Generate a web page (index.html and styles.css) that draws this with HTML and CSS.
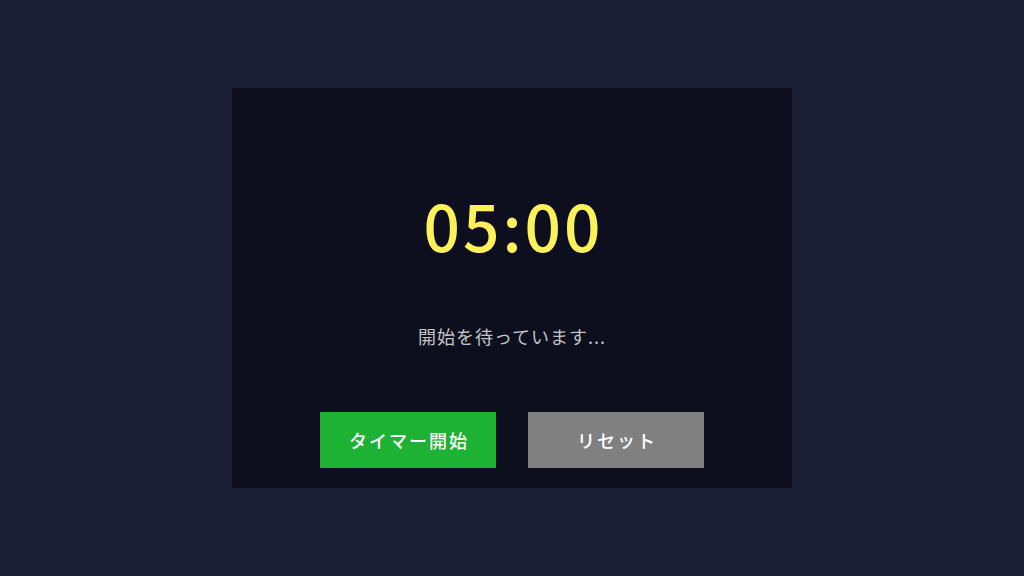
FILE: index.html
```html
<!DOCTYPE html>
<html lang="ja">
<head>
<meta charset="utf-8">
<link rel="stylesheet" href="styles.css">
</head>
<body>
<div class="card">
  <div class="timer">05:00</div>
  <div class="status">開始を待っています...</div>
  <div class="buttons">
    <button class="btn start">タイマー開始</button>
    <button class="btn reset">リセット</button>
  </div>
</div>
</body>
</html>
```
FILE: styles.css
```css
html, body {
  margin: 0;
  height: 100%;
}
body {
  background: #1a1f34;
  display: flex;
  align-items: center;
  justify-content: center;
  font-family: "Noto Sans CJK JP", "Noto Sans", sans-serif;
}
.card {
  width: 560px;
  height: 400px;
  box-sizing: border-box;
  background: #0d0f1f;
  display: flex;
  flex-direction: column;
  align-items: center;
  padding-top: 92px;
}
.timer {
  color: #fff159;
  font-size: 64px;
  font-weight: 500;
  letter-spacing: 3px;
  text-indent: 3px;
  line-height: 88px;
  height: 88px;
}
.status {
  margin-top: 54px;
  color: #c4c4c4;
  font-size: 18px;
  letter-spacing: 1px;
  line-height: 28px;
}
.buttons {
  margin-top: 62px;
  display: flex;
  gap: 32px;
}
.btn {
  width: 176px;
  height: 56px;
  border: none;
  color: #fff;
  font-family: inherit;
  font-size: 18px;
  font-weight: 500;
  letter-spacing: 2px;
  text-indent: 2px;
  padding: 0;
}
.start { background: #1db233; }
.reset { background: #808080; }
```
